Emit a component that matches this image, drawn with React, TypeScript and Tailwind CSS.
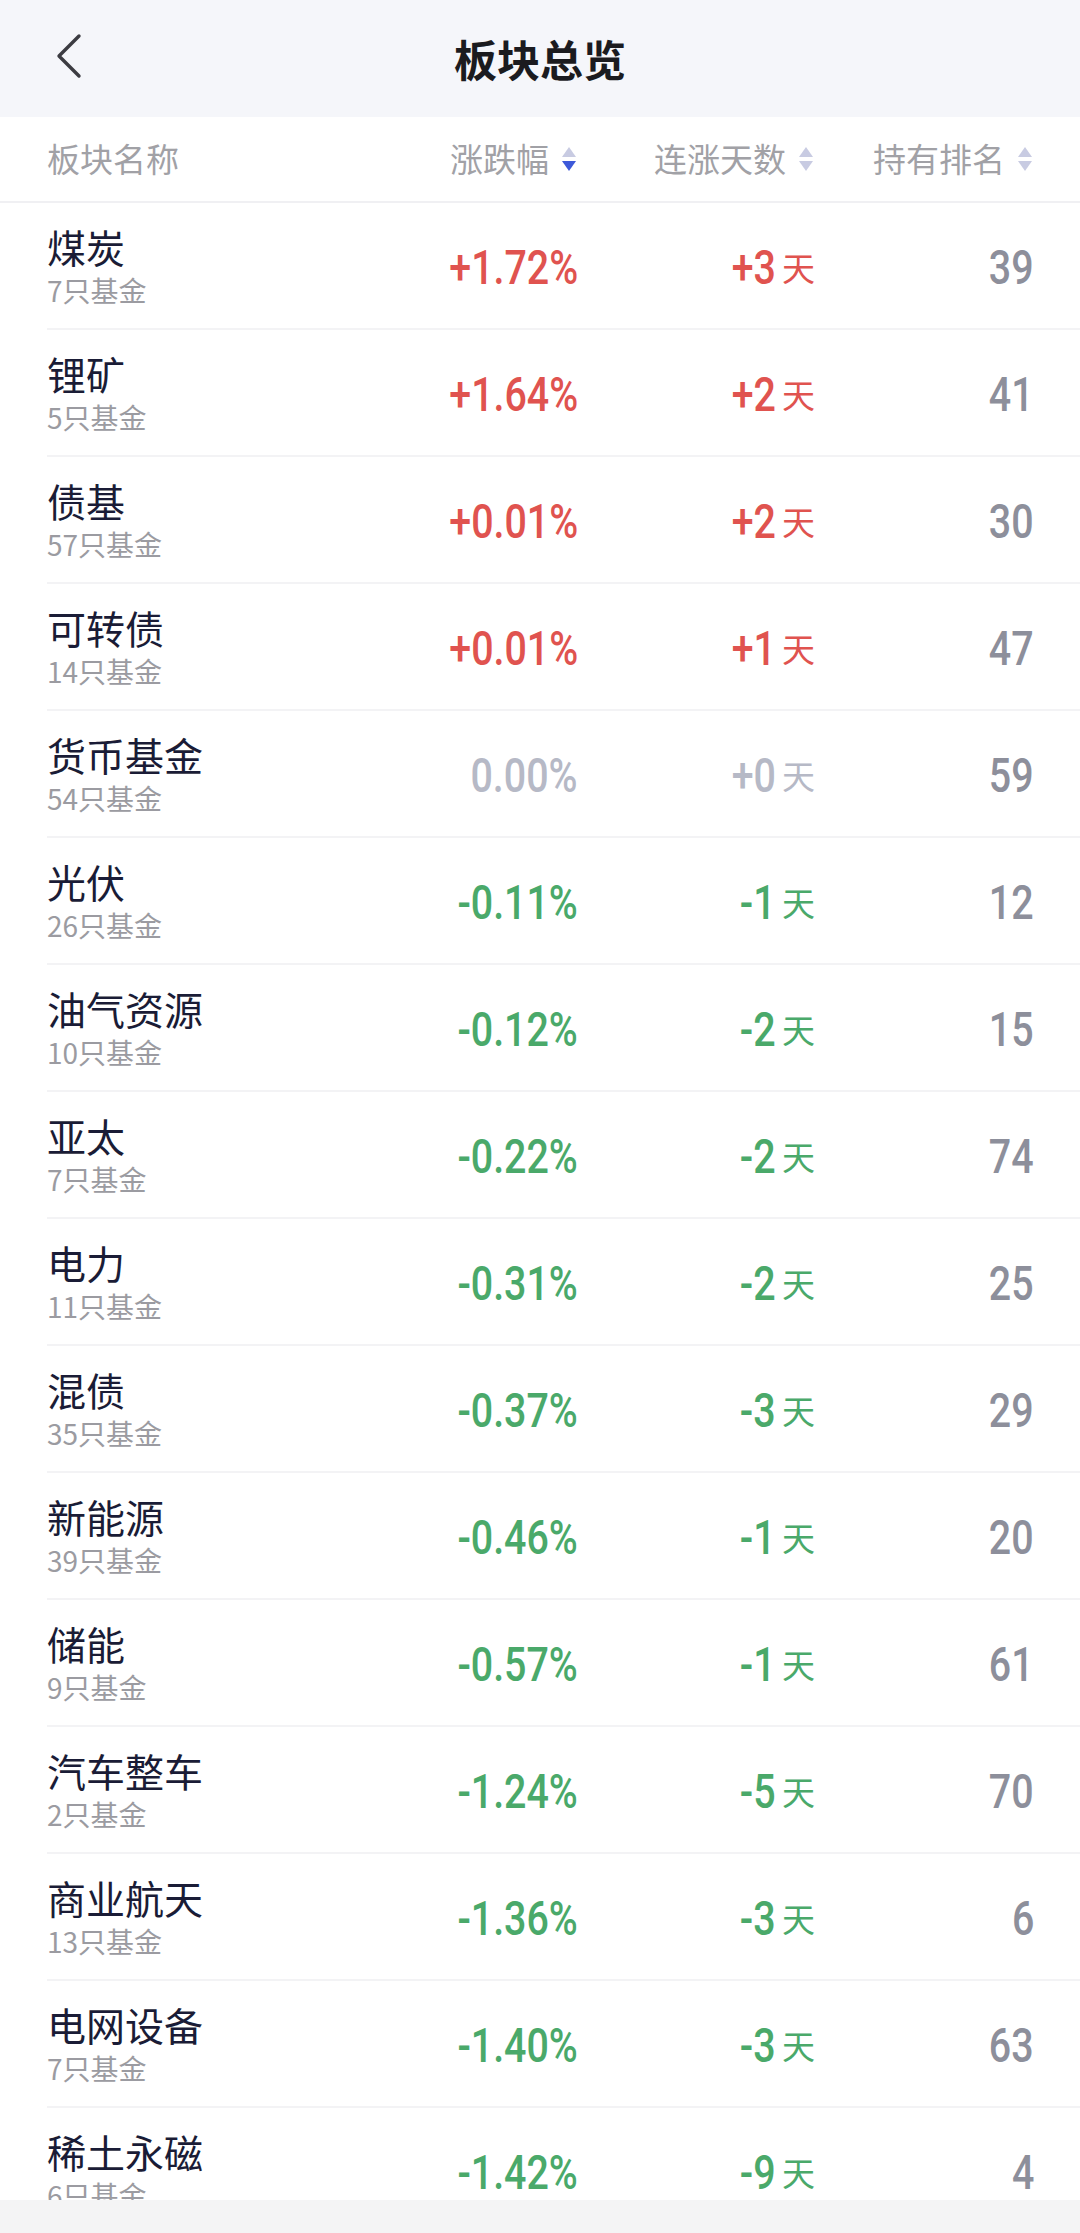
type Row = {
  name: string;
  count: number;
  change: string;
  days: string;
  rank: number;
  trend: 'up' | 'down' | 'flat';
};

const rows: Row[] = [
  { name: '煤炭', count: 7, change: '+1.72%', days: '+3', rank: 39, trend: 'up' },
  { name: '锂矿', count: 5, change: '+1.64%', days: '+2', rank: 41, trend: 'up' },
  { name: '债基', count: 57, change: '+0.01%', days: '+2', rank: 30, trend: 'up' },
  { name: '可转债', count: 14, change: '+0.01%', days: '+1', rank: 47, trend: 'up' },
  { name: '货币基金', count: 54, change: '0.00%', days: '+0', rank: 59, trend: 'flat' },
  { name: '光伏', count: 26, change: '-0.11%', days: '-1', rank: 12, trend: 'down' },
  { name: '油气资源', count: 10, change: '-0.12%', days: '-2', rank: 15, trend: 'down' },
  { name: '亚太', count: 7, change: '-0.22%', days: '-2', rank: 74, trend: 'down' },
  { name: '电力', count: 11, change: '-0.31%', days: '-2', rank: 25, trend: 'down' },
  { name: '混债', count: 35, change: '-0.37%', days: '-3', rank: 29, trend: 'down' },
  { name: '新能源', count: 39, change: '-0.46%', days: '-1', rank: 20, trend: 'down' },
  { name: '储能', count: 9, change: '-0.57%', days: '-1', rank: 61, trend: 'down' },
  { name: '汽车整车', count: 2, change: '-1.24%', days: '-5', rank: 70, trend: 'down' },
  { name: '商业航天', count: 13, change: '-1.36%', days: '-3', rank: 6, trend: 'down' },
  { name: '电网设备', count: 7, change: '-1.40%', days: '-3', rank: 63, trend: 'down' },
  { name: '稀土永磁', count: 6, change: '-1.42%', days: '-9', rank: 4, trend: 'down' },
];

const trendColor = {
  up: 'text-[#e0534f]',
  down: 'text-[#4aa96a]',
  flat: 'text-[#b6b9c6]',
};

const SortIcon = ({ active }: { active?: boolean }) => (
  <svg width="18" height="28" viewBox="0 0 18 28" className="ml-[11px]">
    <path d="M9 2 L16 12 L2 12 Z" fill="#c8cbe2" />
    <path d="M2 16 L16 16 L9 26 Z" fill={active ? '#3d59d9' : '#c8cbe2'} />
  </svg>
);

const App = () => {
  return (
    <div className="w-[1080px] h-[2233px] bg-white flex flex-col overflow-hidden font-['Noto_Sans_CJK_SC',sans-serif]">
      {/* Nav bar */}
      <header className="relative h-[117px] shrink-0 bg-[#f5f6fa] flex items-center justify-center">
        <button className="absolute left-[52px] top-[32px]" aria-label="返回">
          <svg width="34" height="48" viewBox="0 0 34 48" fill="none">
            <path d="M27 4 L7 24 L27 44" stroke="#3c3c42" strokeWidth="3.4" strokeLinecap="round" strokeLinejoin="round" />
          </svg>
        </button>
        <h1 className="text-[43px] font-bold text-[#1b1b1f] leading-none">板块总览</h1>
      </header>

      {/* Column headers */}
      <div className="h-[86px] shrink-0 grid grid-cols-[1fr_220px_237px_219px] items-center pl-[47px] pr-[46px] border-b-2 border-[#f0f0f3] text-[33px] text-[#a1a1a6]">
        <span>板块名称</span>
        <div className="flex items-center justify-end">
          涨跌幅
          <SortIcon active />
        </div>
        <div className="flex items-center justify-end">
          连涨天数
          <SortIcon />
        </div>
        <div className="flex items-center justify-end">
          持有排名
          <SortIcon />
        </div>
      </div>

      {/* List */}
      <div className="flex-1 overflow-hidden">
        {rows.map((r) => (
          <div key={r.name} className="pl-[47px]">
            <div className="h-[127px] grid grid-cols-[1fr_220px_237px_219px] items-center pr-[46px] border-b-2 border-[#f3f3f5]">
              <div className="flex flex-col mt-[4px]">
                <span className="text-[39px] leading-[44px] text-[#1a1c36]">{r.name}</span>
                <span className="text-[28px] leading-[44px] text-[#9b9ba1]">{r.count}只基金</span>
              </div>
              <div className={`flex justify-end mt-[4px] ${trendColor[r.trend]}`}>
                <span className="font-['Roboto',sans-serif] font-medium text-[48px] leading-none inline-block scale-x-[0.82] origin-right">
                  {r.change}
                </span>
              </div>
              <div className={`flex justify-end items-center mt-[4px] ${trendColor[r.trend]}`}>
                <span className="font-['Roboto',sans-serif] font-medium text-[48px] leading-none inline-block scale-x-[0.82] origin-right">
                  {r.days}
                </span>
                <span className="text-[33px] leading-none ml-[6px]">天</span>
              </div>
              <div className="flex justify-end mt-[4px] text-[#8d8f9b]">
                <span className="font-['Roboto',sans-serif] font-medium text-[48px] leading-none inline-block scale-x-[0.82] origin-right">
                  {r.rank}
                </span>
              </div>
            </div>
          </div>
        ))}
      </div>

      {/* Bottom bar */}
      <div className="h-[33px] shrink-0 bg-[#f4f4f5]" />
    </div>
  );
};

export default App;
